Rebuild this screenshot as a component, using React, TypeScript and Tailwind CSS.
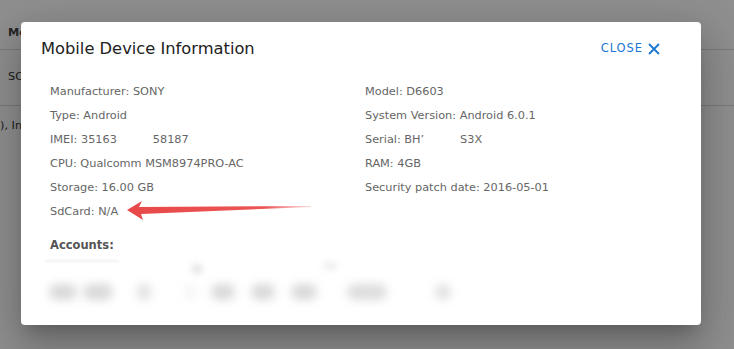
import React from "react";

const left = [
  "Manufacturer: SONY",
  "Type: Android",
  "IMEI: 35163\u00a0\u00a0\u00a0\u00a0\u00a0\u00a0\u00a0\u00a0\u00a0\u00a058187",
  "CPU: Qualcomm MSM8974PRO-AC",
  "Storage: 16.00 GB",
  "SdCard: N/A",
];
const right = [
  "Model: D6603",
  "System Version: Android 6.0.1",
  "Serial: BH\u2019\u00a0\u00a0\u00a0\u00a0\u00a0\u00a0\u00a0\u00a0\u00a0\u00a0S3X",
  "RAM: 4GB",
  "Security patch date: 2016-05-01",
];

const blobs = [
  { w: 28, ml: 28, o: 1 },
  { w: 30, ml: 6, o: 1 },
  { w: 14, ml: 24, o: 0.8 },
  { w: 12, ml: 34, o: 0.25 },
  { w: 24, ml: 14, o: 1 },
  { w: 24, ml: 16, o: 1 },
  { w: 26, ml: 16, o: 1 },
  { w: 40, ml: 30, o: 0.9 },
  { w: 16, ml: 48, o: 0.8 },
];

export default function App() {
  return (
    <div
      className="relative h-[349px] w-[734px] overflow-hidden bg-white text-[#333]"
      style={{ fontFamily: '"DejaVu Sans", sans-serif' }}
    >
      {/* background page */}
      <div className="flex flex-col pt-[18px]">
        <div className="flex h-[32px] items-center border-b border-[#d9d9d9] px-[8px] text-[11.3px] font-bold text-[#444]">
          Mobile
        </div>
        <div className="flex h-[56px] items-center border-b border-[#d9d9d9] px-[8px] text-[11.3px] text-[#333]">
          SONY
        </div>
        <div className="flex h-[40px] items-center text-[11.3px] text-[#333]">
          ), Inc
        </div>
      </div>
      <div className="absolute inset-0 bg-black/[0.44]" />

      {/* dialog */}
      <div className="absolute left-[21px] top-[22px] flex h-[303px] w-[680px] flex-col rounded-[4px] bg-white shadow-[0_11px_15px_-7px_rgba(0,0,0,0.2),0_24px_38px_3px_rgba(0,0,0,0.14),0_9px_46px_8px_rgba(0,0,0,0.12)]">
        <div className="flex items-center justify-between pl-[20px] pr-[40px] pt-[15px]">
          <div className="text-[16.3px] leading-[24px] text-[#222]">Mobile Device Information</div>
          <div className="flex items-center gap-[4px] text-[11.5px] tracking-[0.08em] text-[#1976d2]">
            <span>CLOSE</span>
            <svg width="14" height="14" viewBox="0 0 14 14" className="mb-[1px]">
              <path d="M2 2 L12 12 M12 2 L2 12" stroke="#1976d2" strokeWidth="1.8" fill="none" />
            </svg>
          </div>
        </div>

        <div className="relative mt-[19px] grid grid-cols-[315px_1fr] pl-[29px]">
          <div className="flex flex-col">
            {left.map((t) => (
              <div key={t} className="h-[24px] text-[11.3px] leading-[24px] text-[#666]">
                {t}
              </div>
            ))}
          </div>
          <div className="flex flex-col">
            {right.map((t) => (
              <div key={t} className="h-[24px] text-[11.3px] leading-[24px] text-[#666]">
                {t}
              </div>
            ))}
          </div>
          <svg
            className="absolute left-[98px] top-[118px]"
            width="200"
            height="24"
            viewBox="0 0 200 24"
          >
            <defs>
              <linearGradient id="ar" x1="0" x2="1" y1="0" y2="0">
                <stop offset="0" stopColor="#e84848" />
                <stop offset="0.75" stopColor="#ec5555" />
                <stop offset="1" stopColor="#f08080" stopOpacity="0.3" />
              </linearGradient>
            </defs>
            <path
              d="M8 12 L23 3 L20 9 L192 8 L192 9 L22 16 L24 22 Z"
              fill="url(#ar)"
            />
          </svg>
        </div>

        <div className="mt-[12px] pl-[29px] text-[11.5px] font-bold leading-[18px] text-[#555]">
          Accounts:
        </div>
        <div className="ml-[24px] mt-[6px] h-[2px] w-[74px] bg-[#f0f0f0] blur-[1px]" />
        <div className="relative mt-[22px] flex items-center">
          {blobs.map((b, i) => (
            <div
              key={i}
              className="h-[16px] rounded-full bg-[#d9d9d9] blur-[5px]"
              style={{ width: b.w, marginLeft: b.ml, opacity: b.o }}
            />
          ))}
          <div className="absolute left-[170px] top-[-20px] h-[10px] w-[12px] rounded-full bg-[#e6e6e6] blur-[3px]" />
          <div className="absolute left-[302px] top-[-22px] h-[8px] w-[14px] rounded-full bg-[#efefef] blur-[3px]" />
        </div>
      </div>
    </div>
  );
}
